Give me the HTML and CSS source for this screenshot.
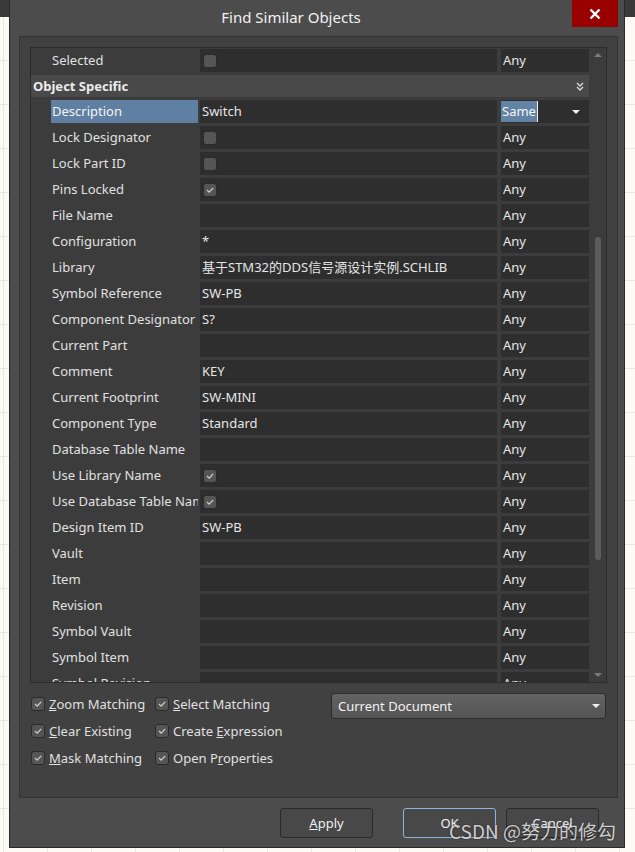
FILE: index.html
```html
<!DOCTYPE html>
<html lang="en">

<head>
    <meta charset="UTF-8">
    <meta name="viewport" content="width=device-width, initial-scale=1.0">
    <title>Find Similar Objects</title>
    <link rel="stylesheet" href="styles.css">
</head>

<body>
    <div class="dialog">
        <div class="titlebar">
            <div class="title">Find Similar Objects</div>
            <div class="close">
                <svg width="12" height="12" viewBox="0 0 12 12"><path d="M1.5 1.5 L10.5 10.5 M10.5 1.5 L1.5 10.5" stroke="#fff" stroke-width="2.4"/></svg>
            </div>
        </div>

        <div class="panel">
            <div class="grid">
                <div class="rows">
                    <div class="row">
                        <div class="label">Selected</div>
                        <div class="value"><span class="cb"></span></div>
                        <div class="match">Any</div>
                    </div>
                    <div class="group">
                        <span>Object Specific</span>
                        <svg width="8" height="9" viewBox="0 0 8 9"><path d="M1 1 L4 4 L7 1 M1 5 L4 8 L7 5" fill="none" stroke="#ddd" stroke-width="1.3"/></svg>
                    </div>
                    <div class="row">
                        <div class="label"><span class="sel">Description</span></div>
                        <div class="value">Switch</div>
                        <div class="match edit"><span class="sel-text">Same</span><i class="tri"></i></div>
                    </div>
                    <div class="row">
                        <div class="label">Lock Designator</div>
                        <div class="value"><span class="cb"></span></div>
                        <div class="match">Any</div>
                    </div>
                    <div class="row">
                        <div class="label">Lock Part ID</div>
                        <div class="value"><span class="cb"></span></div>
                        <div class="match">Any</div>
                    </div>
                    <div class="row">
                        <div class="label">Pins Locked</div>
                        <div class="value"><span class="cb on"><svg width="10" height="10" viewBox="0 0 10 10"><path d="M2 5 L4.2 7.2 L8.2 2.8" fill="none" stroke="#cfcfcf" stroke-width="1.2"/></svg></span></div>
                        <div class="match">Any</div>
                    </div>
                    <div class="row">
                        <div class="label">File Name</div>
                        <div class="value"></div>
                        <div class="match">Any</div>
                    </div>
                    <div class="row">
                        <div class="label">Configuration</div>
                        <div class="value">*</div>
                        <div class="match">Any</div>
                    </div>
                    <div class="row">
                        <div class="label">Library</div>
                        <div class="value">基于STM32的DDS信号源设计实例.SCHLIB</div>
                        <div class="match">Any</div>
                    </div>
                    <div class="row">
                        <div class="label">Symbol Reference</div>
                        <div class="value">SW-PB</div>
                        <div class="match">Any</div>
                    </div>
                    <div class="row">
                        <div class="label">Component Designator</div>
                        <div class="value">S?</div>
                        <div class="match">Any</div>
                    </div>
                    <div class="row">
                        <div class="label">Current Part</div>
                        <div class="value"></div>
                        <div class="match">Any</div>
                    </div>
                    <div class="row">
                        <div class="label">Comment</div>
                        <div class="value">KEY</div>
                        <div class="match">Any</div>
                    </div>
                    <div class="row">
                        <div class="label">Current Footprint</div>
                        <div class="value">SW-MINI</div>
                        <div class="match">Any</div>
                    </div>
                    <div class="row">
                        <div class="label">Component Type</div>
                        <div class="value">Standard</div>
                        <div class="match">Any</div>
                    </div>
                    <div class="row">
                        <div class="label">Database Table Name</div>
                        <div class="value"></div>
                        <div class="match">Any</div>
                    </div>
                    <div class="row">
                        <div class="label">Use Library Name</div>
                        <div class="value"><span class="cb on"><svg width="10" height="10" viewBox="0 0 10 10"><path d="M2 5 L4.2 7.2 L8.2 2.8" fill="none" stroke="#cfcfcf" stroke-width="1.2"/></svg></span></div>
                        <div class="match">Any</div>
                    </div>
                    <div class="row">
                        <div class="label">Use Database Table Name</div>
                        <div class="value"><span class="cb on"><svg width="10" height="10" viewBox="0 0 10 10"><path d="M2 5 L4.2 7.2 L8.2 2.8" fill="none" stroke="#cfcfcf" stroke-width="1.2"/></svg></span></div>
                        <div class="match">Any</div>
                    </div>
                    <div class="row">
                        <div class="label">Design Item ID</div>
                        <div class="value">SW-PB</div>
                        <div class="match">Any</div>
                    </div>
                    <div class="row">
                        <div class="label">Vault</div>
                        <div class="value"></div>
                        <div class="match">Any</div>
                    </div>
                    <div class="row">
                        <div class="label">Item</div>
                        <div class="value"></div>
                        <div class="match">Any</div>
                    </div>
                    <div class="row">
                        <div class="label">Revision</div>
                        <div class="value"></div>
                        <div class="match">Any</div>
                    </div>
                    <div class="row">
                        <div class="label">Symbol Vault</div>
                        <div class="value"></div>
                        <div class="match">Any</div>
                    </div>
                    <div class="row">
                        <div class="label">Symbol Item</div>
                        <div class="value"></div>
                        <div class="match">Any</div>
                    </div>
                    <div class="row">
                        <div class="label">Symbol Revision</div>
                        <div class="value"></div>
                        <div class="match">Any</div>
                    </div>
                </div>
                <div class="scrollbar">
                    <i class="arrow up"></i>
                    <div class="thumb"></div>
                    <i class="arrow down"></i>
                </div>
            </div>

            <div class="options">
                <div class="checks">
                    <label class="opt"><span class="cb on"><svg width="10" height="10" viewBox="0 0 10 10"><path d="M2 5 L4.2 7.2 L8.2 2.8" fill="none" stroke="#cfcfcf" stroke-width="1.2"/></svg></span><span><u>Z</u>oom Matching</span></label>
                    <label class="opt"><span class="cb on"><svg width="10" height="10" viewBox="0 0 10 10"><path d="M2 5 L4.2 7.2 L8.2 2.8" fill="none" stroke="#cfcfcf" stroke-width="1.2"/></svg></span><span><u>S</u>elect Matching</span></label>
                    <label class="opt"><span class="cb on"><svg width="10" height="10" viewBox="0 0 10 10"><path d="M2 5 L4.2 7.2 L8.2 2.8" fill="none" stroke="#cfcfcf" stroke-width="1.2"/></svg></span><span><u>C</u>lear Existing</span></label>
                    <label class="opt"><span class="cb on"><svg width="10" height="10" viewBox="0 0 10 10"><path d="M2 5 L4.2 7.2 L8.2 2.8" fill="none" stroke="#cfcfcf" stroke-width="1.2"/></svg></span><span>Create <u>E</u>xpression</span></label>
                    <label class="opt"><span class="cb on"><svg width="10" height="10" viewBox="0 0 10 10"><path d="M2 5 L4.2 7.2 L8.2 2.8" fill="none" stroke="#cfcfcf" stroke-width="1.2"/></svg></span><span><u>M</u>ask Matching</span></label>
                    <label class="opt"><span class="cb on"><svg width="10" height="10" viewBox="0 0 10 10"><path d="M2 5 L4.2 7.2 L8.2 2.8" fill="none" stroke="#cfcfcf" stroke-width="1.2"/></svg></span><span>Open P<u>r</u>operties</span></label>
                </div>
                <div class="combo">
                    <span>Current Document</span>
                    <i class="tri"></i>
                </div>
            </div>
        </div>

        <div class="buttons">
            <button class="btn"><u>A</u>pply</button>
            <button class="btn ok">OK</button>
            <button class="btn">Cancel</button>
        </div>
    </div>

    <div class="watermark">CSDN @努力的修勾</div>
</body>

</html>
```

FILE: styles.css
```css
body {
    margin: 0;
    height: 852px;
    overflow: hidden;
    position: relative;
    font-family: "Noto Sans", "Noto Sans CJK SC", sans-serif;
    font-size: 13px;
    color: #e2e2e2;
    background-color: #fcfaf4;
    background-image:
        linear-gradient(#3a3a3a, #3a3a3a),
        repeating-linear-gradient(0deg, transparent 0, transparent 43px, #ebe7dd 43px, #ebe7dd 44px),
        repeating-linear-gradient(90deg, transparent 0, transparent 3px, #ebe7dd 3px, #ebe7dd 4px, transparent 4px, transparent 44px);
    background-size: 100% 17px, 100% 100%, 100% 100%;
    background-repeat: no-repeat, repeat, repeat;
}

.dialog {
    margin-left: 9px;
    width: 616px;
    height: 848px;
    box-sizing: border-box;
    background-color: #4c4c4c;
    border: 1px solid #2a2a2a;
    border-top: none;
    display: flex;
    flex-direction: column;
}

.titlebar {
    display: flex;
    height: 36px;
    padding-right: 6px;
}

.title {
    flex: 1;
    text-align: center;
    font-size: 15px;
    line-height: 35px;
    color: #f2f2f2;
}

.close {
    width: 46px;
    height: 27px;
    background-color: #990000;
    display: flex;
    align-items: center;
    justify-content: center;
}

.panel {
    margin: 0 6px 0 9px;
    height: 762px;
    box-sizing: border-box;
    background-color: #414141;
    border: 1px solid #333;
    padding: 10px 10px 0 10px;
}

.grid {
    display: flex;
    height: 636px;
    box-sizing: border-box;
    background-color: #3c3c3c;
    border: 1px solid #2b2b2b;
}

.rows {
    width: 558px;
    overflow: hidden;
    padding-top: 1px;
}

.row {
    display: flex;
    height: 23px;
    margin-bottom: 3px;
    line-height: 23px;
}

.label {
    width: 147px;
    margin-left: 20px;
    padding-left: 1px;
    box-sizing: border-box;
    white-space: nowrap;
    overflow: hidden;
    color: #e0e0e0;
}

.label .sel {
    display: block;
    margin-left: -1px;
    padding-left: 1px;
    background-color: #5f80a2;
    color: #f4f4f4;
}

.value {
    width: 297px;
    margin-left: 2px;
    padding-left: 2px;
    box-sizing: border-box;
    background-color: #2e2e2e;
    white-space: nowrap;
    overflow: hidden;
    display: flex;
    align-items: center;
    color: #e6e6e6;
}

.match {
    width: 88px;
    margin-left: 4px;
    padding-left: 2px;
    box-sizing: border-box;
    background-color: #2e2e2e;
    color: #e6e6e6;
}

.match.edit {
    display: flex;
    align-items: center;
    padding-left: 0;
}

.sel-text {
    background-color: #6383a5;
    color: #f6f6f6;
    line-height: 21px;
    padding: 0 1px;
    border-right: 1px solid #eee;
}

.match .tri {
    margin-left: auto;
    margin-right: 9px;
}

.tri {
    width: 0;
    height: 0;
    border-left: 4px solid transparent;
    border-right: 4px solid transparent;
    border-top: 4px solid #f0f0f0;
}

.group {
    display: flex;
    align-items: center;
    justify-content: space-between;
    height: 22px;
    margin-bottom: 3px;
    padding: 0 5px 0 2px;
    background-color: #494949;
    font-weight: bold;
    color: #ececec;
}

.cb {
    width: 14px;
    height: 14px;
    box-sizing: border-box;
    border: 1px solid #2a2a2a;
    border-radius: 3px;
    background-color: #555;
    display: inline-flex;
    align-items: center;
    justify-content: center;
    flex-shrink: 0;
}

.value .cb {
    margin-left: 1px;
}

.scrollbar {
    width: 14px;
    margin-left: 2px;
    display: flex;
    flex-direction: column;
    align-items: center;
}

.arrow {
    width: 0;
    height: 0;
    border-left: 4px solid transparent;
    border-right: 4px solid transparent;
}

.arrow.up {
    margin-top: 5px;
    border-bottom: 4px solid #7a7a7a;
}

.arrow.down {
    margin-top: auto;
    margin-bottom: 5px;
    border-top: 4px solid #7a7a7a;
}

.thumb {
    width: 6px;
    height: 323px;
    margin-top: 180px;
    border-radius: 3px;
    background-color: #5c5c5c;
}

.options {
    display: flex;
    margin-top: 7px;
}

.checks {
    display: grid;
    grid-template-columns: 124px 150px;
    grid-auto-rows: 27px;
    padding-left: 1px;
}

.opt {
    display: flex;
    align-items: center;
    gap: 4px;
    color: #e0e0e0;
    white-space: nowrap;
}

.combo {
    margin-left: auto;
    margin-top: 3px;
    margin-right: 1px;
    width: 275px;
    height: 26px;
    box-sizing: border-box;
    border: 1px solid #2b2b2b;
    border-radius: 3px;
    background: linear-gradient(#636363, #545454);
    display: flex;
    align-items: center;
    padding: 0 5px 0 6px;
    color: #f2f2f2;
}

.combo .tri {
    margin-left: auto;
}

.buttons {
    display: flex;
    justify-content: flex-end;
    padding: 10px 25px 0 0;
}

.btn {
    width: 93px;
    height: 30px;
    margin-left: 10px;
    background-color: #484848;
    border: 1px solid #2a2a2a;
    border-radius: 3px;
    color: #f0f0f0;
    font-family: "Noto Sans", "Noto Sans CJK SC", sans-serif;
    font-size: 13px;
}

.btn.ok {
    margin-left: 30px;
    border-color: #8db4dc;
}

.watermark {
    position: absolute;
    left: 449px;
    top: 817px;
    font-size: 19px;
    color: rgba(235, 235, 235, 0.85);
    text-shadow: 0 0 2px rgba(0, 0, 0, 0.6);
    font-family: "Noto Sans CJK SC", sans-serif;
    white-space: nowrap;
}
```
